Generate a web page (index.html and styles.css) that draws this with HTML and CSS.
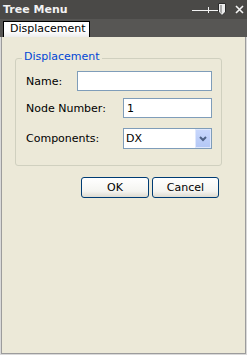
FILE: index.html
```html
<!DOCTYPE html>
<html lang="en">
<head>
    <meta charset="UTF-8">
    <meta name="viewport" content="width=device-width, initial-scale=1.0">
    <title>Tree Menu</title>
    <link rel="stylesheet" href="styles.css">
</head>
<body>
    <div class="window">
        <!-- Title bar with pin slider and close -->
        <div class="titlebar">
            <span class="title">Tree Menu</span>
            <div class="controls">
                <svg class="pin" width="35" height="13" viewBox="0 0 35 13">
                    <path d="M0 7.5H26" stroke="#f2f2f2" stroke-width="1"/>
                    <path d="M16.5 4V10" stroke="#f2f2f2" stroke-width="1"/>
                    <path d="M26.5 0.5H33.5V9L30 12.5L26.5 9Z" fill="#ececec" stroke="#2b2b2b" stroke-width="1"/>
                    <path d="M28 2V9L30 11V2Z" fill="#a9a9a9"/>
                </svg>
                <svg class="close" width="9" height="9" viewBox="0 0 9 9">
                    <path d="M1 1L8 8M8 1L1 8" stroke="#f5f5f5" stroke-width="1.6"/>
                </svg>
            </div>
        </div>

        <div class="tabstrip">
            <div class="tab">Displacement</div>
        </div>

        <div class="panel">
            <fieldset class="group">
                <legend>Displacement</legend>
                <div class="row row-name">
                    <label for="name">Name:</label>
                    <input type="text" id="name" class="field wide">
                </div>
                <div class="row row-node">
                    <label for="node">Node Number:</label>
                    <input type="text" id="node" class="field" value="1">
                </div>
                <div class="row row-comp">
                    <label>Components:</label>
                    <div class="select">
                        <span class="select-value">DX</span>
                        <span class="select-arrow">
                            <svg width="8" height="6" viewBox="0 0 8 6">
                                <path d="M1 1L4 4L7 1" fill="none" stroke="#4d6185" stroke-width="2"/>
                            </svg>
                        </span>
                    </div>
                </div>
            </fieldset>

            <div class="actions">
                <button class="btn btn-ok">OK</button>
                <button class="btn btn-cancel">Cancel</button>
            </div>
        </div>
    </div>
</body>
</html>
```

FILE: styles.css
```css
/* XP style tool window */
body {
    margin: 0;
    padding: 0;
    font-family: "DejaVu Sans", Verdana, sans-serif;
    font-size: 11px;
    background: #ffffff;
}
.window {
    width: 247px;
    height: 355px;
    display: flex;
    flex-direction: column;
}
.titlebar {
    height: 19px;
    background: #4a4947;
    display: flex;
    align-items: center;
    justify-content: space-between;
    padding: 0 3px 0 3px;
    color: #f2f2f2;
}
.title {
    font-weight: bold;
    line-height: 19px;
}
.controls {
    display: flex;
    align-items: center;
    gap: 8px;
}
.pin {
    display: block;
}
.close {
    display: block;
}
.tabstrip {
    height: 18px;
    background: #575654;
    padding-left: 3px;
    display: flex;
    align-items: flex-end;
}
.tab {
    border: 1px solid #000;
    border-bottom: none;
    background: linear-gradient(#ffffff, #ffffff 60%, #ececec);
    padding: 0 3px 2px 6px;
    line-height: 13px;
    color: #000;
}
.panel {
    flex: 1;
    background: #ece9d8;
    border: 1px solid #d9d9d9;
    border-top: none;
    box-shadow: inset 1px 0 #9c9c9c, inset -1px 0 #9c9c9c, inset 0 -1px #9c9c9c;
    padding: 13px 0 0 14px;
}
.group {
    margin: 0;
    width: 207px;
    box-sizing: border-box;
    border: 1px solid #d0d0bf;
    border-radius: 3px;
    padding: 0 9px 16px 10px;
}
.group legend {
    color: #0046d5;
    line-height: 13px;
    padding: 0 2px 4px 2px;
    margin-left: -4px;
}
.row {
    display: flex;
    align-items: center;
    justify-content: space-between;
    height: 20px;
}
.row-name {
    margin-top: 4px;
}
.row-node {
    margin-top: 7px;
}
.row-comp {
    margin-top: 10px;
    height: 21px;
}
.row label {
    color: #000;
}
.field {
    width: 89px;
    height: 20px;
    box-sizing: border-box;
    border: 1px solid #7f9db9;
    padding: 0 3px;
    margin: 0;
    font-family: inherit;
    font-size: 11px;
    background: #fff;
    outline: none;
}
.field.wide {
    width: 135px;
}
.select {
    width: 89px;
    height: 21px;
    box-sizing: border-box;
    border: 1px solid #7f9db9;
    background: #fff;
    display: flex;
    align-items: center;
    justify-content: space-between;
}
.select-value {
    padding-left: 2px;
}
.select-arrow {
    width: 16px;
    height: 19px;
    box-sizing: border-box;
    border: 1px solid #dfe8fd;
    background: linear-gradient(#c8d7fc, #b4c8f6);
    display: flex;
    align-items: center;
    justify-content: center;
}
.select-arrow svg {
    display: block;
}
.actions {
    width: 207px;
    box-sizing: border-box;
    padding-right: 3px;
    margin-top: 11px;
    display: flex;
    justify-content: flex-end;
    gap: 3px;
}
.btn {
    height: 21px;
    box-sizing: border-box;
    border: 1px solid #003c74;
    border-radius: 3px;
    background: linear-gradient(#ffffff, #f4f4f0 70%, #dedbd0);
    font-family: inherit;
    font-size: 11px;
    color: #000;
    padding: 0;
}
.btn-ok {
    width: 68px;
}
.btn-cancel {
    width: 67px;
}
```
